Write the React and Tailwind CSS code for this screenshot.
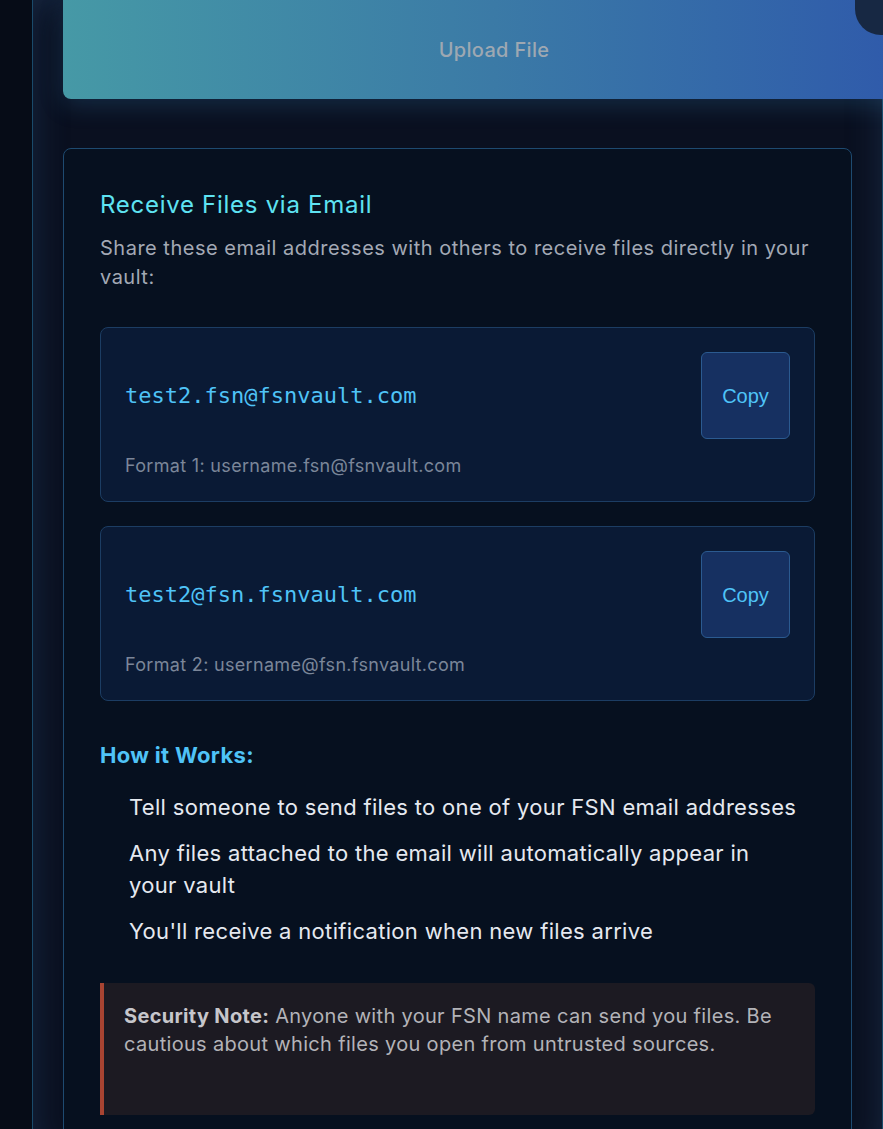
import React from 'react';

const emails = [
  { address: 'test2.fsn@fsnvault.com', label: 'Format 1: username.fsn@fsnvault.com' },
  { address: 'test2@fsn.fsnvault.com', label: 'Format 2: username@fsn.fsnvault.com' },
];

const steps = [
  'Tell someone to send files to one of your FSN email addresses',
  'Any files attached to the email will automatically appear in your vault',
  "You'll receive a notification when new files arrive",
];

const EmailBox = ({ address, label }) => (
  <div className="rounded-lg border border-[#1c3d63] bg-[#0a1a35] px-6 pt-6 pb-[22px]">
    <div className="flex items-center justify-between">
      <span className="text-[22px] tracking-normal text-[#4fc3f7] [font-family:'DejaVu_Sans_Mono',monospace]">{address}</span>
      <button className="flex h-[87px] w-[89px] items-center justify-center rounded-md border border-[#2b5a90] bg-[#163061] text-[20px] tracking-normal text-[#4fc3f7] [font-family:'Liberation_Sans',Arial,sans-serif]">
        Copy
      </button>
    </div>
    <p className="mt-[13px] text-[18px] leading-[27px] text-[#7b8699]">{label}</p>
  </div>
);

export default function App() {
  return (
    <div className="relative min-h-[1129px] overflow-hidden bg-[#060c17] tracking-[0.02em] [font-family:Inter,'Noto_Sans',sans-serif]">
      <div className="ml-[32px] min-h-[1129px] w-[851px] border-x border-[#1a4a6a] bg-[#0a1020] pl-[30px] shadow-[inset_0_0_34px_rgba(40,70,110,0.45)]">
        <button className="flex h-[99px] w-[862px] items-center justify-center rounded-bl-lg bg-gradient-to-r from-[#4699a6] via-[#3b7aa6] to-[#2f58ab] text-[20px] font-medium text-[#9ea8b2] shadow-[0_6px_24px_rgba(60,140,200,0.22)]">
          Upload File
        </button>

        <div className="mt-[49px] w-[789px] rounded-lg border border-[#1e4a70] bg-[#06101f] px-9 pt-[40px] pb-10">
          <h2 className="text-[24px] leading-[32px] tracking-[0.03em] text-[#5ee3f2]">Receive Files via Email</h2>
          <p className="mt-[13px] text-[20px] leading-[29px] tracking-[0.025em] text-[#a3a9b5]">
            Share these email addresses with others to receive files directly in your vault:
          </p>

          <div className="mt-[35px] flex flex-col gap-6">
            {emails.map((e) => (
              <EmailBox key={e.address} {...e} />
            ))}
          </div>

          <h3 className="mt-[38px] text-[22px] font-bold leading-[32px] text-[#4fc3f7]">How it Works:</h3>
          <ul className="mt-[20px] flex flex-col gap-[14px] pl-[29px] pr-[16px]">
            {steps.map((s) => (
              <li key={s} className="text-[22px] leading-[32px] text-[#e5e9f0]">{s}</li>
            ))}
          </ul>

          <div className="mt-[36px] rounded-r-md border-l-4 border-[#a84432] bg-[#1c1a22] px-5 pt-[19px] pb-[57px]">
            <p className="text-[20px] leading-[28px] text-[#b3b3b8]">
              <strong className="font-bold text-[#c6c6cb]">Security Note:</strong>{' '}
              Anyone with your FSN name can send you files. Be cautious about which files you open from untrusted sources.
            </p>
          </div>
        </div>
      </div>

      <div className="absolute right-0 top-0 h-[35px] w-[28px] rounded-bl-[26px] bg-[#172843]" />
    </div>
  );
}
